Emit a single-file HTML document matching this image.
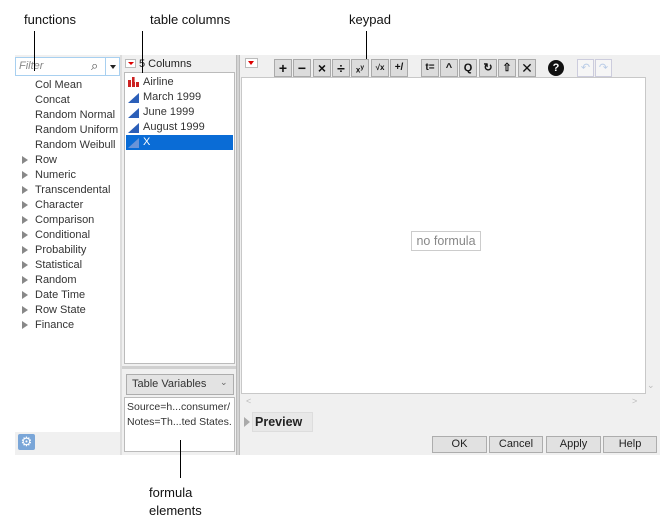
<!DOCTYPE html>
<html><head><style>
*{box-sizing:border-box;margin:0;padding:0}
body{width:660px;height:525px;background:#fff;position:relative;font-family:"Liberation Sans",sans-serif;font-size:11px;color:#222;overflow:hidden}
.a{position:absolute}
.lbl{font-size:13px;color:#111}
.ln{position:absolute;width:1px;background:#000}
.dlg{position:absolute;left:15px;top:55px;width:645px;height:400px;background:#f0f0f0}
.fl{position:absolute;left:15px;top:75px;width:105px;height:357px;background:#fff}
.it{position:absolute;font-size:11px;color:#333}
.tri{position:absolute;width:0;height:0;border-left:6px solid #888;border-top:4px solid transparent;border-bottom:4px solid transparent}
.btn{position:absolute;top:59px;width:18px;height:18px;background:#dcdcdc;border:1px solid #aaa;font-weight:bold;font-size:14px;text-align:center;line-height:16px;color:#111}
.pb{position:absolute;top:436px;height:17px;background:#e1e1e1;border:1px solid #adadad;text-align:center;font-size:11px;line-height:15px}
</style></head><body>
<div class="a lbl" style="left:24px;top:12px">functions</div>
<div class="a lbl" style="left:150px;top:12px">table columns</div>
<div class="a lbl" style="left:349px;top:12px">keypad</div>
<div class="dlg"></div>
<div class="fl"></div>
<div class="a" style="left:15px;top:57px;width:91px;height:19px;background:#fff;border:1px solid #a8d0f0"></div>
<div class="a" style="left:19px;top:60px;font-style:italic;color:#888">Filter</div>
<div class="a" style="left:91px;top:58px;font-size:13px;color:#555">&#x2315;</div>
<div class="a" style="left:106px;top:57px;width:14px;height:19px;background:#fff;border:1px solid #a8d0f0;border-left:none"></div>
<div class="a" style="left:110px;top:65px;border-left:3px solid transparent;border-right:3px solid transparent;border-top:4px solid #222"></div>
<div class="it" style="left:35px;top:79px">Col Mean</div>
<div class="it" style="left:35px;top:94px">Concat</div>
<div class="it" style="left:35px;top:109px">Random Normal</div>
<div class="it" style="left:35px;top:124px">Random Uniform</div>
<div class="it" style="left:35px;top:139px">Random Weibull</div>
<div class="tri" style="left:22px;top:156px"></div><div class="it" style="left:35px;top:154px">Row</div>
<div class="tri" style="left:22px;top:171px"></div><div class="it" style="left:35px;top:169px">Numeric</div>
<div class="tri" style="left:22px;top:186px"></div><div class="it" style="left:35px;top:184px">Transcendental</div>
<div class="tri" style="left:22px;top:201px"></div><div class="it" style="left:35px;top:199px">Character</div>
<div class="tri" style="left:22px;top:216px"></div><div class="it" style="left:35px;top:214px">Comparison</div>
<div class="tri" style="left:22px;top:231px"></div><div class="it" style="left:35px;top:229px">Conditional</div>
<div class="tri" style="left:22px;top:246px"></div><div class="it" style="left:35px;top:244px">Probability</div>
<div class="tri" style="left:22px;top:261px"></div><div class="it" style="left:35px;top:259px">Statistical</div>
<div class="tri" style="left:22px;top:276px"></div><div class="it" style="left:35px;top:274px">Random</div>
<div class="tri" style="left:22px;top:291px"></div><div class="it" style="left:35px;top:289px">Date Time</div>
<div class="tri" style="left:22px;top:306px"></div><div class="it" style="left:35px;top:304px">Row State</div>
<div class="tri" style="left:22px;top:321px"></div><div class="it" style="left:35px;top:319px">Finance</div>
<div class="a" style="left:18px;top:434px;width:17px;height:16px;background:#7aa6d8;border-radius:2px;color:#fff;font-size:13px;text-align:center;line-height:16px">&#9881;</div>
<div class="a" style="left:120px;top:55px;width:2px;height:400px;background:#ddd"></div>
<div class="a" style="left:125px;top:59px;width:11px;height:9px;background:#fff;border:1px solid #bbb"></div>
<div class="a" style="left:128px;top:62px;border-left:3px solid transparent;border-right:3px solid transparent;border-top:3px solid #d00"></div>
<div class="a" style="left:139px;top:58px;font-size:11px">5 Columns</div>
<div class="a" style="left:124px;top:72px;width:111px;height:292px;background:#fff;border:1px solid #bbb"></div>
<div class="a" style="left:128px;top:77px;width:11px;height:10px;background:linear-gradient(90deg,#c22 0 3px,transparent 3px 4px,#c22 4px 7px,transparent 7px 8px,#c22 8px);clip-path:polygon(0 30%,30% 30%,30% 0,60% 0,60% 50%,100% 50%,100% 100%,0 100%)"></div>
<div class="it" style="left:143px;top:76px">Airline</div>
<div class="a" style="left:128px;top:93px;width:11px;height:10px;background:#2c5fb8;clip-path:polygon(100% 0,100% 100%,0 100%)"></div>
<div class="it" style="left:143px;top:91px">March 1999</div>
<div class="a" style="left:128px;top:108px;width:11px;height:10px;background:#2c5fb8;clip-path:polygon(100% 0,100% 100%,0 100%)"></div>
<div class="it" style="left:143px;top:106px">June 1999</div>
<div class="a" style="left:128px;top:123px;width:11px;height:10px;background:#2c5fb8;clip-path:polygon(100% 0,100% 100%,0 100%)"></div>
<div class="it" style="left:143px;top:121px">August 1999</div>
<div class="a" style="left:126px;top:135px;width:107px;height:15px;background:#0a6cd6"></div>
<div class="a" style="left:128px;top:138px;width:11px;height:10px;background:#6a94d8;clip-path:polygon(100% 0,100% 100%,0 100%)"></div>
<div class="it" style="left:143px;top:136px;color:#fff">X</div>
<div class="a" style="left:122px;top:366px;width:116px;height:3px;background:#d0d0d0"></div>
<div class="a" style="left:126px;top:374px;width:108px;height:21px;background:#e3e3e3;border:1px solid #adadad"></div>
<div class="it" style="left:132px;top:378px">Table Variables</div>
<div class="it" style="left:220px;top:377px;font-size:9px;color:#666">&#x2304;</div>
<div class="a" style="left:124px;top:397px;width:111px;height:55px;background:#fff;border:1px solid #bbb"></div>
<div class="it" style="left:127px;top:401px;font-size:10.5px">Source=h...consumer/</div>
<div class="it" style="left:127px;top:416px;font-size:10.5px">Notes=Th...ted States.</div>
<div class="a" style="left:236px;top:55px;width:4px;height:400px;background:#d4d4d4;border-left:1px solid #bbb;border-right:1px solid #bbb"></div>
<div class="a" style="left:245px;top:58px;width:13px;height:10px;background:#fff;border:1px solid #bbb"></div>
<div class="a" style="left:248px;top:61px;border-left:3.5px solid transparent;border-right:3.5px solid transparent;border-top:4px solid #d00"></div>
<div class="btn" style="left:274px">+</div>
<div class="btn" style="left:293px">&minus;</div>
<div class="btn" style="left:313px">&times;</div>
<div class="btn" style="left:332px">&divide;</div>
<div class="btn" style="left:351px;font-size:8px">x<sup>y</sup></div>
<div class="btn" style="left:371px;font-size:8px">&#8730;x</div>
<div class="btn" style="left:390px;font-size:10px">+/</div>
<div class="btn" style="left:421px;font-size:10px">t=</div>
<div class="btn" style="left:440px;font-size:11px">^</div>
<div class="btn" style="left:459px;font-size:11px">Q</div>
<div class="btn" style="left:479px;font-size:11px">&#8635;</div>
<div class="btn" style="left:498px;font-size:11px">&#8679;</div>
<div class="btn" style="left:518px;font-weight:normal">&#x2715;</div>
<div class="a" style="left:548px;top:60px;width:16px;height:16px;border-radius:50%;background:#111;color:#fff;font-weight:bold;font-size:11px;text-align:center;line-height:16px">?</div>
<div class="a" style="left:577px;top:59px;width:17px;height:18px;border:1px solid #ccd;background:#f6f6f6;color:#b8cbe6;text-align:center;line-height:16px">&#8630;</div>
<div class="a" style="left:595px;top:59px;width:17px;height:18px;border:1px solid #ccd;background:#f6f6f6;color:#b8cbe6;text-align:center;line-height:16px">&#8631;</div>
<div class="a" style="left:241px;top:77px;width:405px;height:317px;background:#fff;border:1px solid #c8c8c8"></div>
<div class="a" style="left:411px;top:231px;width:70px;height:20px;border:1px solid #ccc;color:#888;font-size:12.5px;text-align:center;line-height:18px">no formula</div>
<div class="a" style="left:647px;top:380px;font-size:9px;color:#bbb">&#x2304;</div>
<div class="a" style="left:246px;top:396px;font-size:9px;color:#bbb">&lt;</div>
<div class="a" style="left:632px;top:396px;font-size:9px;color:#bbb">&gt;</div>
<div class="a" style="left:244px;top:417px;border-left:6px solid #aaa;border-top:5px solid transparent;border-bottom:5px solid transparent"></div>
<div class="a" style="left:252px;top:412px;width:61px;height:20px;background:#e8e8e8;border:1px solid #ddd;font-weight:bold;font-size:12.5px;line-height:18px;padding-left:2px">Preview</div>
<div class="pb" style="left:432px;width:55px">OK</div>
<div class="pb" style="left:489px;width:54px">Cancel</div>
<div class="pb" style="left:546px;width:55px">Apply</div>
<div class="pb" style="left:603px;width:54px">Help</div>
<div class="ln" style="left:34px;top:31px;height:40px"></div>
<div class="ln" style="left:142px;top:31px;height:42px"></div>
<div class="ln" style="left:366px;top:31px;height:28px"></div>
<div class="ln" style="left:180px;top:440px;height:38px"></div>
<div class="a lbl" style="left:149px;top:484px;text-align:left;line-height:18px">formula<br>elements</div>
</body></html>
